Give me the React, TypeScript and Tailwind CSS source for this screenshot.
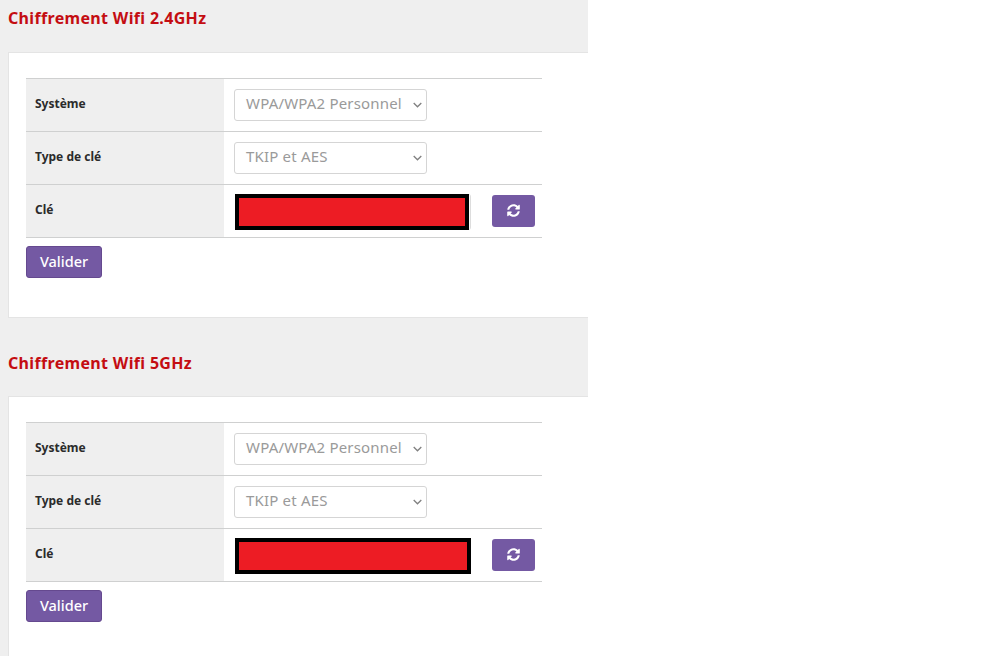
import React from "react";
import { FaSyncAlt } from "react-icons/fa";

const font = { fontFamily: '"Noto Sans", "Liberation Sans", sans-serif' };

function Chevron() {
  return (
    <svg width="9" height="6" viewBox="0 0 9 6" className="mt-[3px] shrink-0">
      <path d="M.7 1l3.8 3.8L8.3 1" fill="none" stroke="#808080" strokeWidth="1.3" />
    </svg>
  );
}

function SelectBox({ value }: { value: string }) {
  return (
    <div className="flex h-8 w-[193px] items-center justify-between rounded-[3px] border border-[#d5d5d5] bg-white pb-[2px] pl-[11px] pr-[4px] text-[15px] tracking-[0.18px] text-[#9a9a9a]">
      <span className="whitespace-nowrap">{value}</span>
      <Chevron />
    </div>
  );
}

function Row({ label, children }: { label: string; children: React.ReactNode }) {
  return (
    <div className="flex h-[53px] border-b border-[#cfd0d0]">
      <div className="flex w-[198px] items-center bg-[#efefef] pb-[3px] pl-[9px] text-xs font-bold text-[#2b2b2b]">
        {label}
      </div>
      <div className="flex flex-1 items-center pb-[1px] pl-[10px]">{children}</div>
    </div>
  );
}

function Section({
  title,
  head,
  keyWidth,
  cardHeight,
}: {
  title: string;
  head: string;
  keyWidth: string;
  cardHeight: string;
}) {
  return (
    <section>
      <div className={head}>
        <h2 className="pl-2 text-base leading-5 font-bold tracking-[0.33px] text-[#c40d12]">{title}</h2>
      </div>
      <div className={`ml-2 border border-r-0 border-[#e4e4e4] bg-white pt-[25px] pl-[17px] ${cardHeight}`}>
        <div className="w-[516px]">
          <div className="border-t border-[#cfd0d0]">
            <Row label="Système">
              <SelectBox value="WPA/WPA2 Personnel" />
            </Row>
            <Row label="Type de clé">
              <SelectBox value="TKIP et AES" />
            </Row>
            <Row label="Clé">
              {/* red block hides the key, the input's own edge still shows past it */}
              <div className="ml-px mt-[2px] h-9 w-[236px] rounded-r-[3px] border-r border-[#dddddd]">
                <div className={`box-border h-9 border-[4px] border-black bg-[#ed1c24] ${keyWidth}`} />
              </div>
              <button className="ml-auto mr-[7px] flex h-8 w-[43px] items-center justify-center rounded-[3px] bg-[#7459a3] text-white">
                <FaSyncAlt className="text-[13px]" />
              </button>
            </Row>
          </div>
          <button className="mt-2 h-[32px] w-[76px] rounded-[3px] border border-[#65498f] bg-[#7459a3] pb-[1px] text-[14.5px] font-medium text-white">
            Valider
          </button>
        </div>
      </div>
    </section>
  );
}

export default function App() {
  return (
    <main className="h-[656px] w-[998px] overflow-hidden bg-white" style={font}>
      <div className="h-[656px] w-[588px] bg-[#efefef]">
        <Section
          title="Chiffrement Wifi 2.4GHz"
          head="h-[52px] pt-[8px]"
          keyWidth="w-[234px]"
          cardHeight="h-[266px]"
        />
        <Section
          title="Chiffrement Wifi 5GHz"
          head="h-[78px] pt-[35px]"
          keyWidth="w-[236px]"
          cardHeight="h-[300px]"
        />
      </div>
    </main>
  );
}
